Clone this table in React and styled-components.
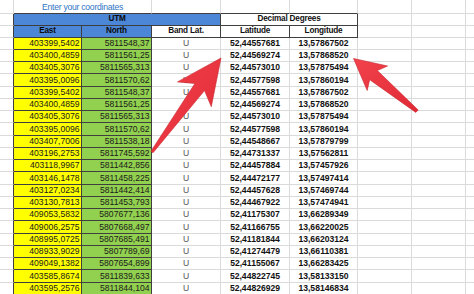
import React from "react";
import styled, { createGlobalStyle } from "styled-components";

const Global = createGlobalStyle`
  html, body { margin: 0; padding: 0; background: #fff; overflow: hidden; }
  body { font-family: "Liberation Sans", Arial, sans-serif; }
`;

const DARK = "#3f3f3f";
const LIGHT = "#dadada";

const Page = styled.div`
  position: relative;
  width: 474px;
  height: 294px;
  overflow: hidden;
`;

const Sheet = styled.div`
  display: grid;
  grid-template-columns: 14px 68px 70px 69px 69px 68px 54px 54px 60px;
  grid-template-rows: 14px 12px 11.5px;
  grid-auto-rows: 12.25px;
  font-size: 8.6px;
  line-height: 1;
  color: #111;
`;

const Cell = styled.div`
  box-sizing: border-box;
  display: flex;
  align-items: center;
  justify-content: center;
  overflow: visible;
  white-space: nowrap;
  background: #fff;
  border-right: 1px solid ${(p) => (p.$r ? DARK : LIGHT)};
  border-bottom: 1px solid ${(p) => (p.$b ? DARK : LIGHT)};
  grid-column: span ${(p) => p.$span || 1};
`;

const BlankCell = styled(Cell)``;

const TitleCell = styled(Cell)`
  color: #2f74c4;
  font-size: 8.6px;
  letter-spacing: -0.25px;
  padding-top: 1px;
`;

const BlueHeader = styled(Cell)`
  font-size: 8.2px;
  letter-spacing: -0.2px;
  background: #4c86d6;
  font-weight: 700;
  color: #0b0b0b;
`;

const BoxHeader = styled(Cell)`
  font-size: 8.2px;
  letter-spacing: -0.2px;
  font-weight: 700;
  color: #111;
`;

const EastCell = styled(Cell)`
  background: #ffff00;
  justify-content: flex-end;
  padding-right: 1.5px;
  color: #1a1a1a;
`;

const NorthCell = styled(Cell)`
  background: #92d050;
  justify-content: flex-end;
  padding-right: 1.5px;
  color: #1a1a1a;
`;

const BandCell = styled(Cell)`
  color: #555;
`;

const DegreeCell = styled(Cell)`
  font-weight: 700;
  color: #111;
`;

const ArrowLayer = styled.svg`
  position: absolute;
  left: 0;
  top: 0;
  pointer-events: none;
`;

const rows = [
  ["403399,5402", "5811548,37", "52,44557681", "13,57867502"],
  ["403400,4859", "5811561,25", "52,44569274", "13,57868520"],
  ["403405,3076", "5811565,313", "52,44573010", "13,57875494"],
  ["403395,0096", "5811570,62", "52,44577598", "13,57860194"],
  ["403399,5402", "5811548,37", "52,44557681", "13,57867502"],
  ["403400,4859", "5811561,25", "52,44569274", "13,57868520"],
  ["403405,3076", "5811565,313", "52,44573010", "13,57875494"],
  ["403395,0096", "5811570,62", "52,44577598", "13,57860194"],
  ["403407,7006", "5811538,18", "52,44548667", "13,57879799"],
  ["403196,2753", "5811745,592", "52,44731337", "13,57562811"],
  ["403118,9967", "5811442,856", "52,44457884", "13,57457926"],
  ["403146,1478", "5811458,225", "52,44472177", "13,57497414"],
  ["403127,0234", "5811442,414", "52,44457628", "13,57469744"],
  ["403130,7813", "5811453,793", "52,44467922", "13,57474941"],
  ["409053,5832", "5807677,136", "52,41175307", "13,66289349"],
  ["409006,2575", "5807668,497", "52,41166755", "13,66220025"],
  ["408995,0725", "5807685,491", "52,41181844", "13,66203124"],
  ["408933,9029", "5807789,69", "52,41274479", "13,66110381"],
  ["409049,1382", "5807654,899", "52,41155067", "13,66283425"],
  ["403585,8674", "5811839,633", "52,44822745", "13,58133150"],
  ["403595,2576", "5811844,104", "52,44826929", "13,58146834"],
];

function Blanks({ n, prefix }) {
  return Array.from({ length: n }, (_, i) => <BlankCell key={prefix + i} />);
}

export default function App() {
  return (
    <Page>
      <Global />
      <Sheet>
        {/* title row */}
        <BlankCell />
        <TitleCell $span={2} $b>Enter your coordinates</TitleCell>
        <BlankCell $b />
        <BlankCell $b />
        <BlankCell $b />
        <Blanks n={3} prefix="t" />

        {/* group header row */}
        <BlankCell $r />
        <BlueHeader $span={3} $r $b>UTM</BlueHeader>
        <BoxHeader $span={2} $r $b>Decimal Degrees</BoxHeader>
        <Blanks n={3} prefix="g" />

        {/* column header row */}
        <BlankCell $r />
        <BlueHeader $r $b>East</BlueHeader>
        <BlueHeader $r $b>North</BlueHeader>
        <BoxHeader $r $b>Band Lat.</BoxHeader>
        <BoxHeader $r $b>Latitude</BoxHeader>
        <BoxHeader $r $b>Longitude</BoxHeader>
        <Blanks n={3} prefix="h" />

        {rows.map(([east, north, lat, lon], i) => (
          <React.Fragment key={i}>
            <BlankCell $r />
            <EastCell $r $b>{east}</EastCell>
            <NorthCell $r $b>{north}</NorthCell>
            <BandCell>U</BandCell>
            <DegreeCell>{lat}</DegreeCell>
            <DegreeCell>{lon}</DegreeCell>
            <Blanks n={3} prefix={"r" + i} />
          </React.Fragment>
        ))}
      </Sheet>

      <ArrowLayer width="474" height="294" viewBox="0 0 474 294">
        <defs>
          <linearGradient id="redShade" x1="0" y1="0" x2="1" y2="1">
            <stop offset="0" stopColor="#f2424c" />
            <stop offset="1" stopColor="#e02a35" />
          </linearGradient>
        </defs>
        <polygon
          points="221,58 211.3,106.7 204.5,90.6 153,152.8 151,151.2 194.9,83.5 177.5,81.9"
          fill="url(#redShade)"
          stroke="#c8262f"
          strokeWidth="0.6"
          strokeLinejoin="round"
        />
        <polygon
          points="353.5,58.5 387.6,66 377.3,70.5 418.2,110 415.8,112.4 369.7,79.7 367.2,90.5"
          fill="url(#redShade)"
          stroke="#c8262f"
          strokeWidth="0.6"
          strokeLinejoin="round"
        />
      </ArrowLayer>
    </Page>
  );
}
